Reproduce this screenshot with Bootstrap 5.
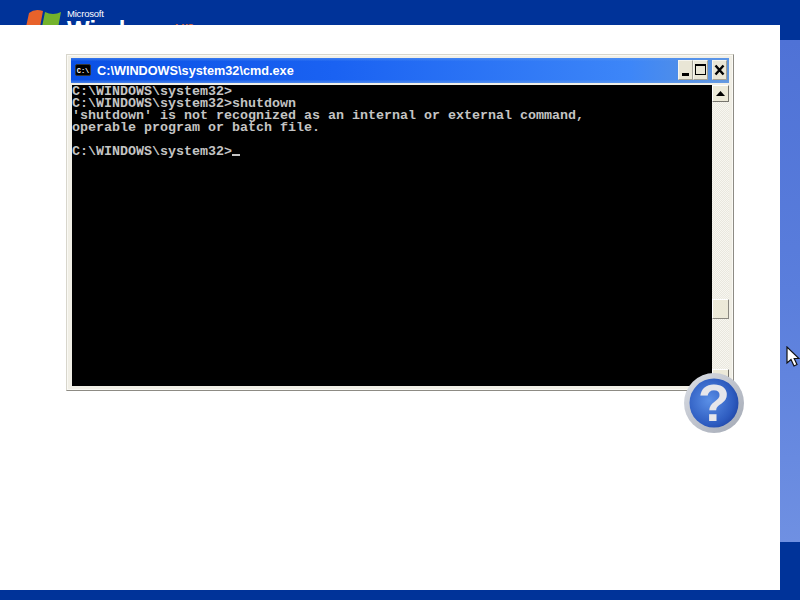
<!DOCTYPE html>
<html lang="en">
<head>
<meta charset="utf-8">
<title>cmd.exe</title>
<link href="https://cdn.jsdelivr.net/npm/bootstrap@5.3.0/dist/css/bootstrap.min.css" rel="stylesheet">
<style>
html,body{margin:0;height:100%;overflow:hidden;background:#003399}
.stage{width:800px;height:600px;position:relative;overflow:hidden}
.maincol{width:780px}
.sidecol{width:20px}
.topstrip{height:25px;background:#003399;overflow:hidden;padding-left:26px;flex:none}
.flagbox{width:36px;height:40px;margin-top:7px;flex:none}
.logotext{margin-left:5px;color:#fff;font-family:"Liberation Sans",sans-serif;line-height:1;white-space:nowrap}
.msword{font-size:9.5px;line-height:8px;margin-top:10px;height:8px;letter-spacing:-.2px}
.winword{font-size:24px;line-height:20px;font-weight:700}
.xpword{font-size:19px;color:#d9683a;font-weight:400;margin-left:3px;vertical-align:4px}
.whitepanel{height:565px;background:#fff;padding:29px 0 0 66px;flex:none}
.footstrip{height:10px;background:#003399;flex:none}
.sidetop{height:40px;background:#003399}
.sidemid{height:502px;background:linear-gradient(180deg,#4f72d6 0,#5a7edc 50%,#6f90e2 100%)}
.sidebot{height:58px;background:#003399}
.winframe{width:668px;height:337px;background:#f1efe6;border:1px solid;border-color:#d8d6cc #8d8b84 #8d8b84 #d8d6cc;padding:3px 4px 4px 4px;box-shadow:inset 0 0 0 1px #faf9f4}
.titlebar{height:25px;background:linear-gradient(180deg,rgba(90,150,240,.55) 0,rgba(90,150,240,0) 14%,rgba(90,150,240,0) 86%,rgba(110,160,230,.6) 100%),linear-gradient(90deg,#0a50e4 0,#1a62f2 40%,#3d86f8 85%,#5f95dc 100%);color:#fff;font:700 12.7px "Liberation Sans",sans-serif;padding:0 2px 0 4px}
.tinyicon{width:16px;height:12px;background:#000;border-radius:2px;color:#fff;font:700 7px/12px "Liberation Mono",monospace;text-align:center;margin-right:6px;flex:none;border:1px solid #333}
.titletext{margin-top:1px}
.ctrlbtn{width:15px;height:20px;background:#e9e6d6;border:1px solid;border-color:#f6f5ee #a3a196 #a3a196 #f6f5ee;flex:none;position:relative;padding:0}
.ctrlgap{margin-left:4px}
.conbody{height:302px;margin-top:2px;margin-left:1px;margin-right:0}
.conscreen{width:640px;background:#000;color:#c4c4c4;font:700 13.33px/12px "Liberation Mono",monospace;white-space:pre;overflow:hidden;padding:1px 0 0;flex:none}
.scrolltrack{width:17px;background:repeating-conic-gradient(#f8f7f1 0 25%,#e9e7de 0 50%) 0 0/2px 2px;position:relative;flex:none}
.scrollcap{height:17px;width:17px;background:#ece9d8;border:1px solid;border-color:#fff #77756e #77756e #fff;display:flex;align-items:center;justify-content:center}
.scrollthumb{height:20px;width:17px;background:#ece9d8;border:1px solid;border-color:#fff #8a8880 #8a8880 #fff;position:absolute;top:214px;left:0}
.scrollend{position:absolute;left:0;bottom:0}
.helpbadge{position:absolute;left:684px;top:373px;width:60px;height:60px}
.cursorpin{position:absolute;left:786px;top:346px;width:14px;height:22px}
.caretbar{display:inline-block;width:8px;height:2px;background:#c4c4c4;vertical-align:-1px}
.qmark{font:700 52px "Liberation Sans",sans-serif;fill:#e6e6ea}
</style>
</head>
<body>
<div class="stage d-flex">
  <div class="maincol d-flex flex-column">
    <div class="topstrip d-flex align-items-start">
      <svg class="flagbox" viewBox="0 0 36 40">
        <path d="M3 6 Q9 1 17 4 L14 20 Q8 17 0 20Z" fill="#e8622a"/>
        <path d="M19 5 Q27 9 35 5 L32 21 Q24 24 16 20Z" fill="#74b32c"/>
        <path d="M0 22 Q7 19 13 22 L11 36 L-2 36Z" fill="#4a7fd8"/>
      </svg>
      <div class="logotext">
        <div class="msword">Microsoft</div>
        <div class="winword">Windows<span class="xpword">xp</span></div>
      </div>
    </div>
    <div class="whitepanel">
      <div class="winframe d-flex flex-column">
        <div class="titlebar d-flex align-items-center">
          <span class="tinyicon">C:\</span>
          <span class="titletext flex-grow-1">C:\WINDOWS\system32\cmd.exe</span>
          <button class="ctrlbtn" aria-label="Minimize"><svg width="13" height="18" viewBox="0 0 13 18" class="d-block"><rect x="3" y="12" width="7" height="3" fill="#000"/></svg></button>
          <button class="ctrlbtn" aria-label="Maximize"><svg width="13" height="18" viewBox="0 0 13 18" class="d-block"><rect x="1.5" y="3.5" width="10" height="10" fill="none" stroke="#000"/><rect x="1" y="3" width="11" height="2" fill="#000"/></svg></button>
          <button class="ctrlbtn ctrlgap" aria-label="Close"><svg width="13" height="18" viewBox="0 0 13 18" class="d-block"><path d="M2.5 4.5l8 9M10.5 4.5l-8 9" stroke="#000" stroke-width="2.4"/></svg></button>
        </div>
        <div class="conbody d-flex">
          <div class="conscreen">C:\WINDOWS\system32&gt;
C:\WINDOWS\system32&gt;shutdown
'shutdown' is not recognized as an internal or external command,
operable program or batch file.

C:\WINDOWS\system32&gt;<span class="caretbar"></span></div>
          <div class="scrolltrack">
            <div class="scrollcap"><svg width="9" height="5" viewBox="0 0 9 5"><path d="M4.5 0L9 5H0Z" fill="#000"/></svg></div>
            <div class="scrollthumb"></div>
            <div class="scrollcap scrollend"><svg width="9" height="5" viewBox="0 0 9 5"><path d="M0 0H9L4.5 5Z" fill="#000"/></svg></div>
          </div>
        </div>
      </div>
    </div>
    <div class="footstrip"></div>
  </div>
  <div class="sidecol d-flex flex-column">
    <div class="sidetop"></div>
    <div class="sidemid"></div>
    <div class="sidebot"></div>
  </div>
  <svg class="helpbadge" viewBox="0 0 60 60">
    <defs>
      <linearGradient id="ringgrad" x1="0" y1="0" x2="1" y2="1"><stop offset="0" stop-color="#dcdfe6"/><stop offset="1" stop-color="#a2a8b4"/></linearGradient>
      <radialGradient id="ballgrad" cx=".4" cy=".45" r=".7"><stop offset="0" stop-color="#5a8fe6"/><stop offset=".7" stop-color="#2e5cc0"/><stop offset="1" stop-color="#1c3f9e"/></radialGradient>
    </defs>
    <circle cx="30" cy="30" r="30" fill="url(#ringgrad)"/>
    <circle cx="30" cy="30" r="24.5" fill="url(#ballgrad)"/>
    <text x="30" y="48" text-anchor="middle" class="qmark">?</text>
  </svg>
  <svg class="cursorpin" viewBox="0 0 14 22"><path d="M1 1V17L5 13.5L8 20L11 18.5L8.2 12.5H13Z" fill="#fff" stroke="#111" stroke-width="1.2"/></svg>
</div>
<script src="https://cdn.jsdelivr.net/npm/bootstrap@5.3.0/dist/js/bootstrap.bundle.min.js"></script>
</body>
</html>
